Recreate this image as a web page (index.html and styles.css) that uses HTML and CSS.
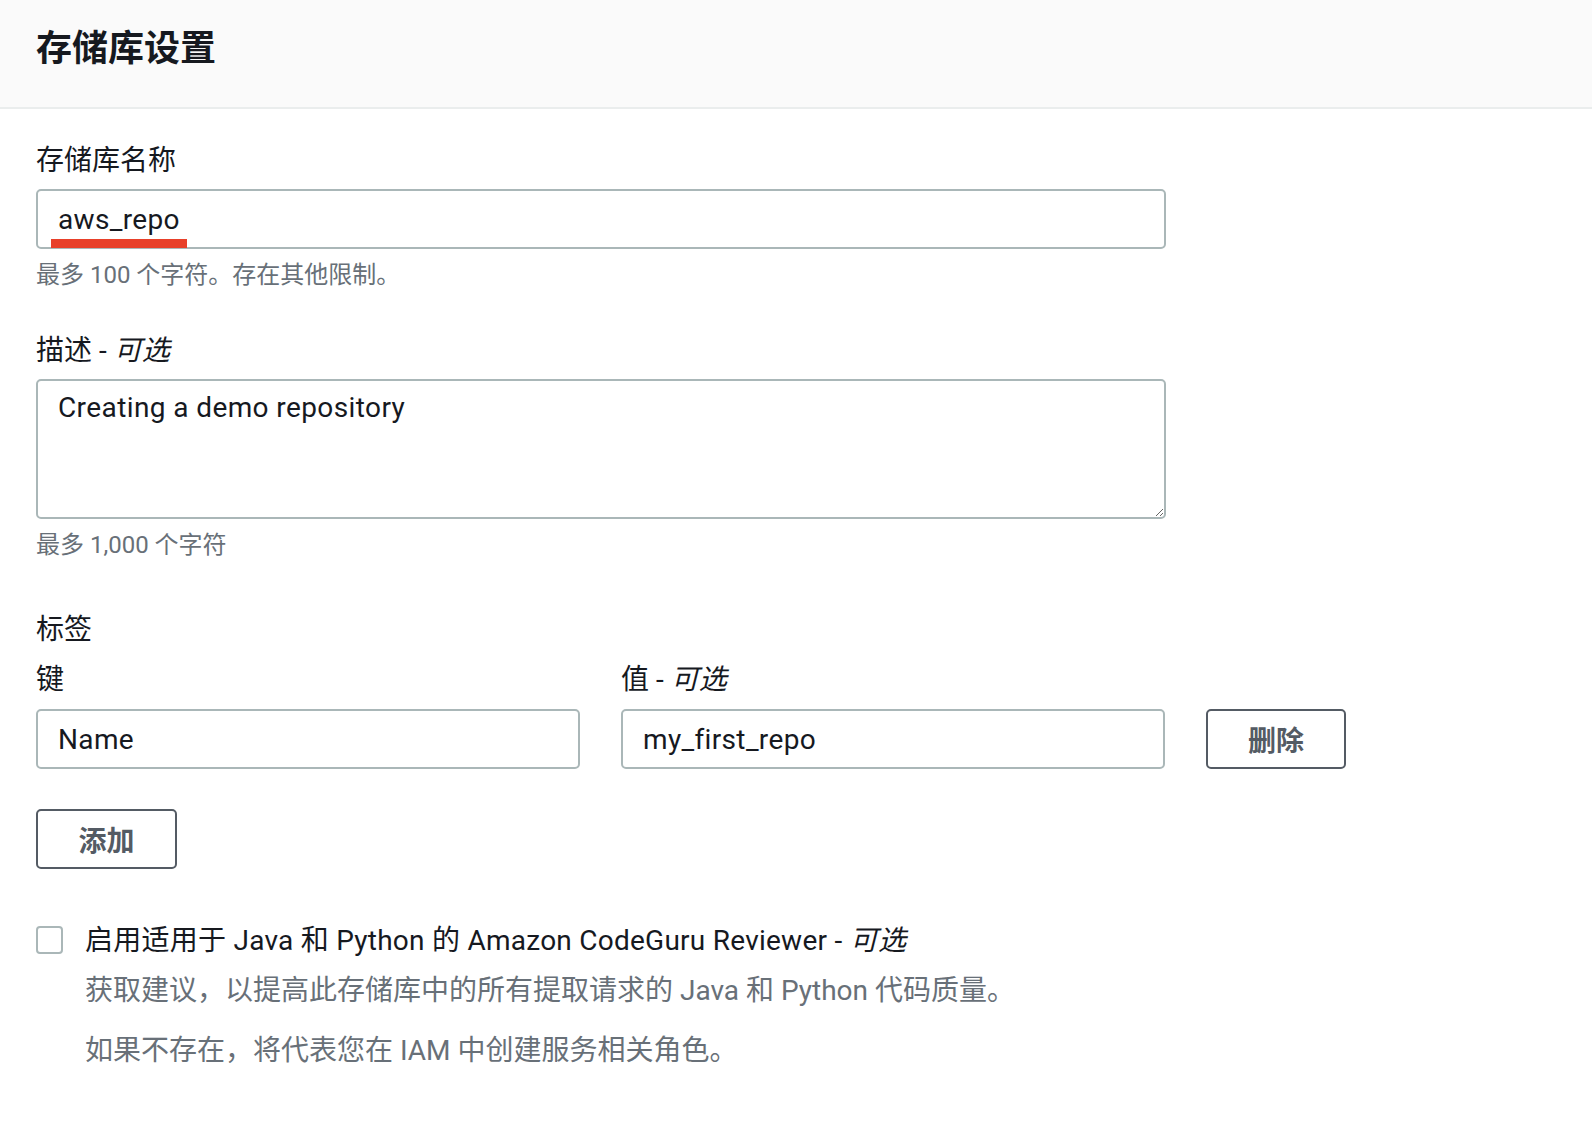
FILE: index.html
```html
<!DOCTYPE html>
<html lang="zh-CN">
<head>
<meta charset="utf-8">
<title>存储库设置</title>
<link rel="stylesheet" href="styles.css">
</head>
<body>
<div class="panel">
  <header class="panel-header">
    <h2 class="panel-title">存储库设置</h2>
  </header>
  <div class="panel-body">
    <div class="field">
      <label class="field-label field-first">存储库名称</label>
      <div class="input-wrap">
        <input class="text-input" type="text" value="aws_repo">
        <span class="annotation"></span>
      </div>
      <div class="hint">最多 100 个字符。存在其他限制。</div>
    </div>

    <div class="field field-desc">
      <label class="field-label field-first">描述 - <i>可选</i></label>
      <textarea class="text-area">Creating a demo repository</textarea>
      <div class="hint hint-desc">最多 1,000 个字符</div>
    </div>

    <div class="tags">
      <div class="tags-title">标签</div>
      <div class="tag-grid">
        <div class="field-label tag-label">键</div>
        <div class="field-label tag-label">值 - <i>可选</i></div>
        <div></div>
        <input class="text-input" type="text" value="Name">
        <input class="text-input" type="text" value="my_first_repo">
        <button class="btn">删除</button>
      </div>
      <button class="btn btn-add">添加</button>
    </div>

    <div class="check-row">
      <span class="checkbox"></span>
      <div class="check-text">
        <div class="check-label">启用适用于 Java 和 Python 的 Amazon CodeGuru Reviewer - <i>可选</i></div>
        <div class="check-desc">获取建议，以提高此存储库中的所有提取请求的 Java 和 Python 代码质量。</div>
        <div class="check-desc check-desc-2">如果不存在，将代表您在 IAM 中创建服务相关角色。</div>
      </div>
    </div>
  </div>
</div>
</body>
</html>
```

FILE: styles.css
```css
* { box-sizing: border-box; }

body {
  margin: 0;
  background: #ffffff;
  font-family: Roboto, "Noto Sans CJK SC", sans-serif;
  color: #16191f;
}

i { font-style: italic; }

.panel-header {
  height: 109px;
  background: #fafafa;
  border-bottom: 2px solid #eaeded;
  display: flex;
  align-items: center;
  padding: 0 36px 10px;
}

.panel-title {
  margin: 0;
  font-size: 36px;
  line-height: 44px;
  font-weight: 700;
  color: #16191f;
}

.panel-body {
  padding: 32px 36px 40px;
}

.field-label {
  display: block;
  font-size: 28px;
  line-height: 40px;
  color: #16191f;
  margin-bottom: 10px;
}

.field-first { margin-bottom: 8px; }

.input-wrap {
  position: relative;
  width: 1130px;
}

.text-input {
  display: block;
  width: 100%;
  height: 60px;
  border: 2px solid #aab7b8;
  border-radius: 5px;
  padding: 0 20px;
  font-family: inherit;
  font-size: 28px;
  letter-spacing: 0.35px;
  color: #16191f;
  background: #fff;
  outline: none;
}

.annotation {
  position: absolute;
  left: 15px;
  top: 50px;
  width: 136px;
  height: 9px;
  background: #e8402a;
}

.hint {
  margin-top: 10px;
  font-size: 24px;
  line-height: 32px;
  color: #687078;
}

.field-desc { margin-top: 40px; }

.text-area {
  display: block;
  width: 1130px;
  height: 140px;
  border: 2px solid #aab7b8;
  border-radius: 5px;
  padding: 7px 20px;
  font-family: inherit;
  font-size: 28px;
  line-height: 40px;
  letter-spacing: 0.4px;
  color: #16191f;
  background: #fff;
  resize: vertical;
  outline: none;
}

.hint-desc { margin-top: 10px; }

.tags { margin-top: 49px; }

.tags-title {
  font-size: 28px;
  line-height: 40px;
  margin-bottom: 10px;
}

.tag-grid {
  display: grid;
  grid-template-columns: 544px 544px 140px;
  column-gap: 41px;
}

.tag-label { margin-bottom: 9px; }

.btn {
  height: 60px;
  border: 2px solid #545b64;
  border-radius: 5px;
  background: #fff;
  color: #545b64;
  font-family: inherit;
  font-size: 28px;
  font-weight: 700;
  padding: 0;
}

.tag-grid .btn { grid-column: 3; }

.btn-add {
  display: block;
  width: 141px;
  margin-top: 40px;
}

.check-row {
  margin-top: 52px;
  display: flex;
  align-items: flex-start;
  gap: 22px;
}

.checkbox {
  flex: none;
  width: 27px;
  height: 28px;
  margin-top: 5px;
  border: 2px solid #aab7b8;
  border-radius: 4px;
  background: #fff;
}

.check-label {
  font-size: 28px;
  line-height: 40px;
  letter-spacing: 0.25px;
  color: #16191f;
}

.check-desc {
  margin-top: 10px;
  font-size: 28px;
  line-height: 40px;
  color: #687078;
}

.check-desc-2 { margin-top: 20px; }
```
